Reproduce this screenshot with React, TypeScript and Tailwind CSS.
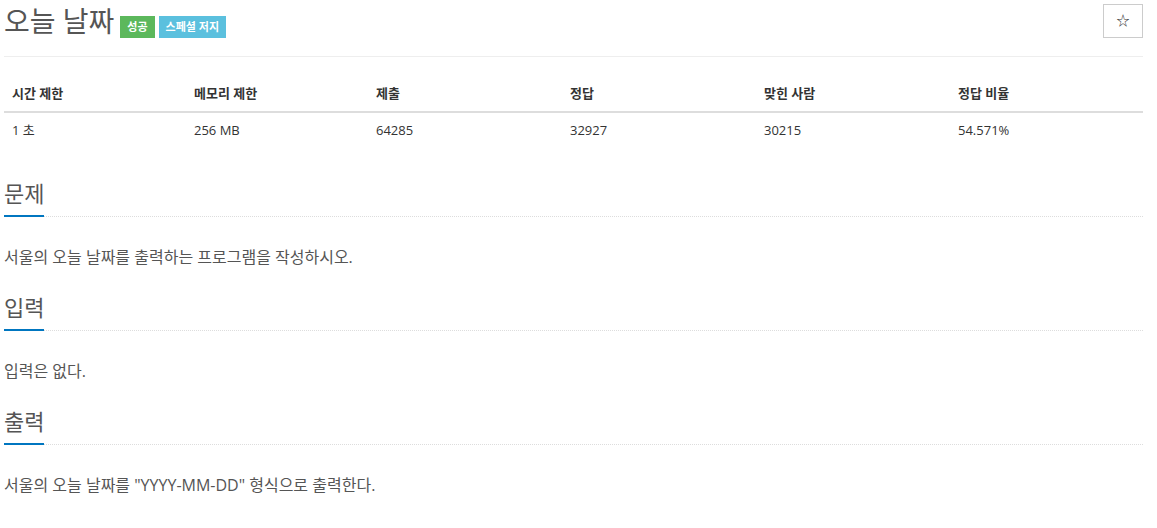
const font = { fontFamily: '"Open Sans", "Noto Sans CJK KR", sans-serif' };

const stats = [
  { label: "시간 제한", value: "1 초", w: "w-[182px]" },
  { label: "메모리 제한", value: "256 MB", w: "w-[182px]" },
  { label: "제출", value: "64285", w: "w-[194px]" },
  { label: "정답", value: "32927", w: "w-[194px]" },
  { label: "맞힌 사람", value: "30215", w: "w-[194px]" },
  { label: "정답 비율", value: "54.571%", w: "flex-1" },
];

function Section({ title, children }: { title: string; children: React.ReactNode }) {
  return (
    <section>
      <div className="flex h-[63px] flex-col justify-end">
        <h2 className="pb-[9px] text-[22px] leading-[26px] text-[#555]">{title}</h2>
        <div className="flex items-end">
          <div className="h-[2px] w-[40px] bg-[#0076c0]" />
          <div className="flex-1 border-b border-dotted border-[#ddd]" />
        </div>
      </div>
      <p className="mt-[29px] text-[16px] leading-[22px] text-[#555]">{children}</p>
    </section>
  );
}

export default function App() {
  return (
    <div className="min-h-[528px] bg-white pl-[4px] pr-[14px]" style={font}>
      <div className="flex items-start justify-between pt-[2px]">
        <div className="flex items-end gap-[4px]">
          <h1 className="mr-[2px] text-[28px] leading-[38px] text-[#555]">오늘 날짜</h1>
          <span className="mb-[2px] bg-[#5cb85c] px-[7px] text-[11px] font-bold leading-[22px] text-white">
            성공
          </span>
          <span className="mb-[2px] bg-[#5bc0de] px-[7px] text-[11px] font-bold leading-[22px] text-white">
            스페셜 저지
          </span>
        </div>
        <button
          type="button"
          className="mt-[2px] flex h-[34px] w-[40px] items-center justify-center border border-[#ccc] bg-white text-[13px] text-[#333]"
        >
          ☆
        </button>
      </div>
      <div className="mt-[16px] border-t border-[#eee]" />
      <div className="mt-[20px]">
        <div className="flex h-[36px] items-center border-b-2 border-[#ddd]">
          {stats.map((s) => (
            <div key={s.label} className={`${s.w} px-[8px] text-[13px] font-bold text-[#333]`}>
              {s.label}
            </div>
          ))}
        </div>
        <div className="flex h-[36px] items-center">
          {stats.map((s) => (
            <div key={s.label} className={`${s.w} px-[8px] text-[13px] text-[#333]`}>
              {s.value}
            </div>
          ))}
        </div>
      </div>
      <div className="mt-[5px]">
        <Section title="문제">서울의 오늘 날짜를 출력하는 프로그램을 작성하시오.</Section>
        <Section title="입력">입력은 없다.</Section>
        <Section title="출력">서울의 오늘 날짜를 "YYYY-MM-DD" 형식으로 출력한다.</Section>
      </div>
    </div>
  );
}
